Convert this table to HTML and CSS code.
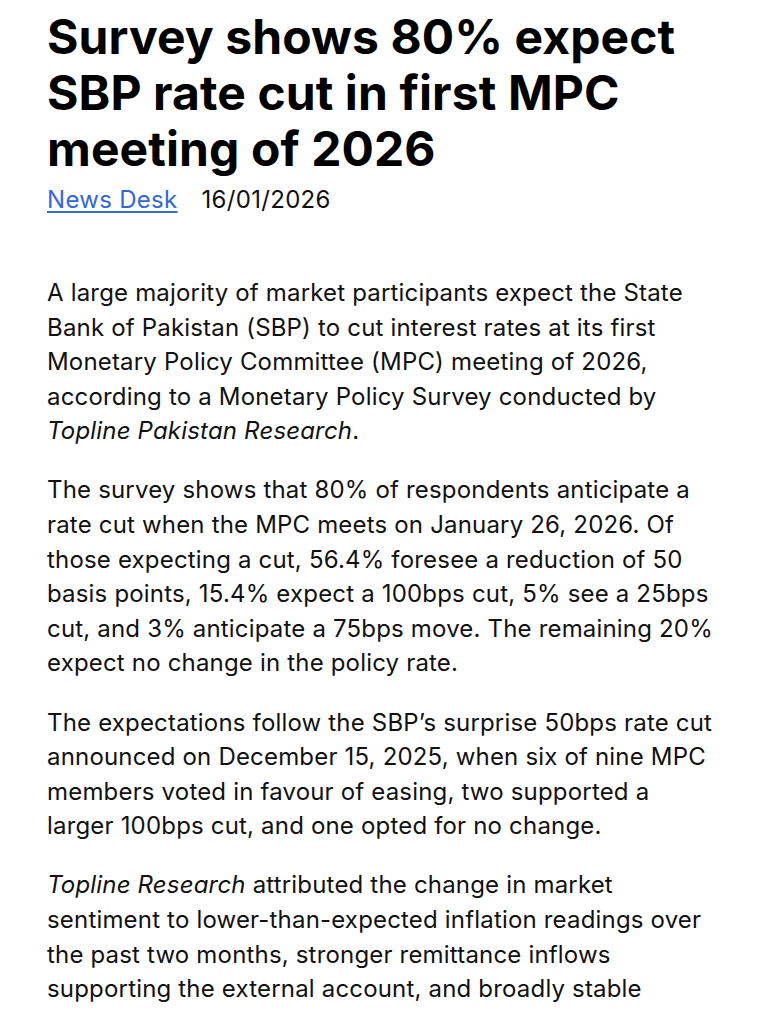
FILE: index.html
```html
<!DOCTYPE html>
<html lang="en">
<head>
<meta charset="utf-8">
<title>Survey shows 80% expect SBP rate cut</title>
<link rel="stylesheet" href="styles.css">
</head>
<body>
<article class="article">
  <h1 class="title">Survey shows 80% expect SBP rate cut in first MPC meeting of 2026</h1>
  <div class="meta">
    <a class="author" href="#">News Desk</a>
    <span class="date">16/01/2026</span>
  </div>
  <div class="content">
    <p>A large majority of market participants expect the State Bank of Pakistan (SBP) to cut interest rates at its first Monetary Policy Committee (MPC) meeting of 2026, according to a Monetary Policy Survey conducted by <em>Topline Pakistan Research</em>.</p>
    <p>The survey shows that 80% of respondents anticipate a rate cut when the MPC meets on January 26, 2026. Of those expecting a cut, 56.4% foresee a reduction of 50 basis points, 15.4% expect a 100bps cut, 5% see a 25bps cut, and 3% anticipate a 75bps move. The remaining 20% expect no change in the policy rate.</p>
    <p>The expectations follow the SBP’s surprise 50bps rate cut announced on December 15, 2025, when six of nine MPC members voted in favour of easing, two supported a larger 100bps cut, and one opted for no change.</p>
    <p><em>Topline Research</em> attributed the change in market sentiment to lower-than-expected inflation readings over the past two months, stronger remittance inflows supporting the external account, and broadly stable</p>
  </div>
</article>
</body>
</html>
```
FILE: styles.css
```css
html, body {
  margin: 0;
  padding: 0;
  background: #ffffff;
}
body {
  font-family: Inter, "Noto Sans", sans-serif;
  color: #111111;
}
.article {
  padding: 9px 47px 0 47px;
}
.title {
  margin: 0;
  font-size: 48px;
  line-height: 56px;
  font-weight: 700;
  letter-spacing: 0.1px;
  color: #000;
}
.meta {
  display: flex;
  gap: 24px;
  margin-top: 6px;
  font-size: 24px;
  line-height: 34px;
  letter-spacing: 0.3px;
}
.author {
  color: #3468d6;
  text-decoration: underline;
  text-decoration-thickness: 1.5px;
  text-underline-offset: 3px;
}
.date {
  color: #111111;
}
.content {
  margin-top: 59px;
  font-size: 24px;
  line-height: 34.6px;
  letter-spacing: 0.18px;
}
.content p {
  margin: 0 0 24.5px 0;
}
.content em {
  font-style: italic;
}
```
